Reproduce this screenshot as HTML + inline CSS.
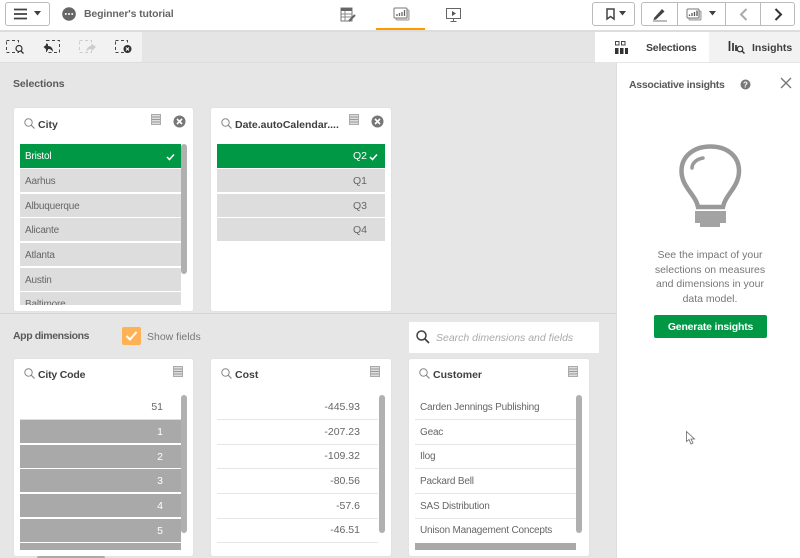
<!DOCTYPE html>
<html><head><meta charset="utf-8"><style>
html,body{margin:0;padding:0}
body{width:800px;height:558px;position:relative;overflow:hidden;background:#e6e6e6;font-family:"Liberation Sans",sans-serif;color:#595959}
.a{position:absolute}
.t{position:absolute;white-space:nowrap;font-size:10.5px;line-height:14px}
.b{font-weight:bold;color:#404040}
.card{position:absolute;background:#fff;border-radius:2px;box-shadow:0 0 1px #ccc}
.row{position:absolute;height:23px;line-height:25px;font-size:10.5px;white-space:nowrap;overflow:hidden}
.x{font-size:10px;letter-spacing:-0.2px}
.g{background:#ddd;color:#666}
.s{background:#009845;color:#fff}
.d{background:#a9a9a9;color:#fff;text-align:right}
.w{color:#666}
.sb{position:absolute;width:6px;background:#b0b0b0;border-radius:3px}
.btn{position:absolute;top:2px;height:24px;background:#fff;border:1px solid #bbb;box-sizing:border-box}
svg{position:absolute;overflow:visible}
</style></head><body>

<!-- top bar -->
<div class="a" style="left:0;top:0;width:800px;height:30px;background:#fff"></div>
<div class="a" style="left:0;top:30px;width:800px;height:2px;background:#ddd"></div>
<div class="btn" style="left:5px;width:45px;border-radius:3px"></div>
<svg style="left:14px;top:8px" width="14" height="12"><path d="M0 1.5H13M0 6H13M0 10.500H13" stroke="#404040" stroke-width="1.800" fill="none"/></svg>
<svg style="left:34px;top:11px" width="8" height="6"><path d="M0 0H7L3.500 4.500Z" fill="#404040"/></svg>
<svg style="left:62px;top:7px" width="14" height="14"><circle cx="7" cy="7" r="6.800" fill="#666"/><circle cx="3.800" cy="7" r="1" fill="#fff"/><circle cx="7" cy="7" r="1" fill="#fff"/><circle cx="10.200" cy="7" r="1" fill="#fff"/></svg>
<div class="t" style="left:84px;top:7px;font-weight:bold;color:#666;letter-spacing:-0.15px;">Beginner's tutorial</div>

<!-- center tabs -->
<svg style="left:340px;top:7px" width="18" height="16"><rect x="1" y="1" width="11" height="13" fill="#fff" stroke="#777"/><path d="M1 2.500H12" stroke="#666" stroke-width="3"/><path d="M1 7H12M1 10H12M5 4V14" stroke="#888"/><path d="M9 14L15 8" stroke="#666" stroke-width="2"/></svg>
<svg style="left:393px;top:7px" width="17" height="14"><rect x="3" y="3" width="13" height="10" rx="1" fill="#ddd" stroke="#999"/><rect x="1" y="1" width="13" height="10" rx="1" fill="#fff" stroke="#777"/><path d="M4 9V7M6.500 9V6M9 9V5M11.500 9V3" stroke="#666" stroke-width="1.300"/></svg>
<div class="a" style="left:376px;top:28px;width:49px;height:2px;background:#f90"></div>
<svg style="left:446px;top:8px" width="15" height="14"><rect x="0.500" y="0.500" width="14" height="10" fill="#fff" stroke="#666"/><path d="M6 3L10 5.500L6 8Z" fill="#555"/><path d="M7.500 11V13M4.500 13.500H10.500" stroke="#666"/></svg>

<!-- right buttons -->
<div class="btn" style="left:592px;width:43px;border-radius:3px"></div>
<svg style="left:606px;top:8px" width="9" height="12"><path d="M1 1H8V11L4.500 8.500L1 11Z" fill="none" stroke="#444" stroke-width="1.500"/></svg>
<svg style="left:619px;top:11px" width="8" height="6"><path d="M0 0H7L3.500 4.500Z" fill="#404040"/></svg>
<div class="btn" style="left:641px;width:37px;border-radius:3px 0 0 3px"></div>
<svg style="left:652px;top:7px" width="16" height="15"><path d="M2 11L10 2L12.500 4.500L4 12.500L1.500 13Z" fill="#444"/><path d="M1 14H15" stroke="#777"/></svg>
<div class="btn" style="left:677px;width:49px"></div>
<svg style="left:686px;top:8px" width="16" height="13"><rect x="3" y="3" width="12" height="9" rx="1" fill="#ddd" stroke="#999"/><rect x="1" y="1" width="12" height="9" rx="1" fill="#fff" stroke="#777"/><path d="M3.500 8V6.500M6 8V5M8.500 8V4M11 8V2.500" stroke="#555" stroke-width="1.300"/></svg>
<svg style="left:709px;top:11px" width="8" height="6"><path d="M0 0H7L3.500 4.500Z" fill="#404040"/></svg>
<div class="btn" style="left:725px;width:36px"></div>
<svg style="left:739px;top:8px" width="9" height="13"><path d="M7.500 1L2 6.500L7.500 12" fill="none" stroke="#aaa" stroke-width="2"/></svg>
<div class="btn" style="left:760px;width:35px;border-radius:0 3px 3px 0"></div>
<svg style="left:774px;top:8px" width="9" height="13"><path d="M1.500 1L7 6.500L1.500 12" fill="none" stroke="#333" stroke-width="2"/></svg>

<!-- toolbar row -->
<div class="a" style="left:0;top:32px;width:142px;height:30px;background:#f2f2f2"></div>
<div class="a" style="left:142px;top:32px;width:453px;height:30px;background:#e5e5e5"></div>
<div class="a" style="left:0;top:62px;width:595px;height:1px;background:#ddd"></div>
<svg style="left:6px;top:40px" width="18" height="14"><rect x="0.500" y="0.500" width="12" height="12" fill="none" stroke="#444" stroke-dasharray="3 2.500"/><circle cx="13" cy="8.500" r="3" fill="#f2f2f2" stroke="#333" stroke-width="1.200"/><path d="M15 11L17.500 13.500" stroke="#333" stroke-width="1.300"/></svg>
<svg style="left:43px;top:40px" width="18" height="14"><rect x="3.500" y="0.500" width="13" height="12" fill="none" stroke="#444" stroke-dasharray="3 2.500"/><path d="M0.500 7L5 3.500V6C8 6 10 8 10 12C8.500 9.500 7 9 5 9V11Z" fill="#333"/></svg>
<svg style="left:79px;top:40px" width="18" height="14"><rect x="0.500" y="0.500" width="12" height="12" fill="none" stroke="#ccc" stroke-dasharray="3 2.500"/><path d="M17 7L12.500 3.500V6C9.500 6 7.500 8 7.500 12C9 9.500 10.500 9 12.500 9V11Z" fill="#ccc"/></svg>
<svg style="left:115px;top:40px" width="18" height="14"><rect x="0.500" y="0.500" width="12" height="12" fill="none" stroke="#444" stroke-dasharray="3 2.500"/><circle cx="12.500" cy="9" r="4" fill="#333"/><path d="M11 7.500L14 10.500M14 7.500L11 10.500" stroke="#fff"/></svg>

<!-- tabs -->
<div class="a" style="left:595px;top:32px;width:114px;height:30px;background:#fff"></div>
<div class="a" style="left:709px;top:32px;width:91px;height:30px;background:#f2f2f2"></div>
<svg style="left:614px;top:41px" width="14" height="13"><rect x="1.500" y="0.500" width="3.500" height="3.500" fill="none" stroke="#444"/><rect x="7.500" y="0.500" width="3.500" height="3.500" fill="none" stroke="#444"/><rect x="1" y="7" width="3.500" height="6" fill="#333"/><rect x="6" y="7" width="3.500" height="6" fill="#333"/><rect x="11" y="7" width="3" height="6" fill="#333"/></svg>
<div class="t b" style="left:646px;top:41px;letter-spacing:-0.2px;">Selections</div>
<svg style="left:728px;top:41px" width="18" height="13"><path d="M1.500 0V10M5 2V10M8 4V10" stroke="#333" stroke-width="1.700"/><circle cx="12" cy="8" r="2.800" fill="none" stroke="#333" stroke-width="1.200"/><path d="M14 10L16.500 12.500" stroke="#333" stroke-width="1.300"/></svg>
<div class="t b" style="left:752px;top:41px;">Insights</div>

<!-- right panel -->
<div class="a" style="left:616px;top:63px;width:184px;height:495px;background:#fff;border-left:1px solid #ddd;box-sizing:border-box"></div>
<div class="t" style="left:629px;top:78px;font-weight:bold;color:#595959;letter-spacing:-0.3px;">Associative insights</div>
<svg style="left:740px;top:79px" width="11" height="11"><circle cx="5.500" cy="5.500" r="5" fill="#777"/><text x="5.500" y="8.500" font-size="8" font-weight="bold" fill="#fff" text-anchor="middle" font-family="Liberation Sans">?</text></svg>
<svg style="left:780px;top:77px" width="12" height="12"><path d="M1 1L11 11M11 1L1 11" stroke="#777" stroke-width="1.400"/></svg>
<svg style="left:678px;top:143px" width="64" height="86"><path d="M20 64C18 52 3.500 44 3.500 28C3.500 13 16 3.500 32.500 3.500C49 3.500 61 13 61 28C61 44 47 52 45 64Z" fill="none" stroke="#999" stroke-width="4.500"/><path d="M14 25C14 20 19 16 25 15" fill="none" stroke="#999" stroke-width="3.500" stroke-linecap="round"/><path d="M17 68H48V80H42V84H22V80H17Z" fill="#a3a3a3"/></svg>
<div class="t" style="left:617px;top:248px;width:186px;text-align:center;color:#777;line-height:14.500px;white-space:normal;">See the impact of your<br>selections on measures<br>and dimensions in your<br>data model.</div>
<div class="a" style="left:654px;top:315px;width:113px;height:23px;background:#009845;border-radius:2px;color:#fff;font-weight:bold;font-size:10.5px;letter-spacing:-0.2px;line-height:25px;text-align:center;">Generate insights</div>
<svg style="left:686px;top:431px" width="10" height="14"><path d="M0.500 0.500V10.500L3 8.500L5 13L7 12L5 8H8.500Z" fill="#fff" stroke="#666" stroke-width="0.800"/></svg>

<!-- selections -->
<div class="t b" style="left:13px;top:77px;color:#595959;letter-spacing:-0.1px;">Selections</div>
<div class="a" style="left:0;top:313px;width:616px;height:1px;background:#d4d4d4"></div>

<!-- City card -->
<div class="card" style="left:14px;top:108px;width:179px;height:203px"></div>
<svg style="left:24px;top:118px" width="11" height="11"><circle cx="4.500" cy="4.500" r="3.700" fill="none" stroke="#888"/><path d="M7 7L10.500 10.500" stroke="#888" stroke-width="1.200"/></svg>
<div class="t b" style="left:38px;top:118px;">City</div>
<svg style="left:151px;top:114px" width="10" height="12"><rect x="0.500" y="0.500" width="9" height="10" fill="#ddd" stroke="#aaa"/><path d="M1 3H9M1 5.500H9M1 8H9" stroke="#999"/></svg>
<svg style="left:173px;top:115px" width="13" height="13"><circle cx="6.500" cy="6.500" r="6" fill="#777"/><path d="M4 4L9 9M9 4L4 9" stroke="#fff" stroke-width="1.600"/></svg>
<div class="row s x" style="left:20px;top:144px;width:156px;padding-left:5px;height:24px;line-height:25px;">Bristol</div>
<svg style="left:166px;top:153px" width="9" height="8"><path d="M1 4L3.500 6.500L8 1.500" fill="none" stroke="#fff" stroke-width="1.500"/></svg>
<div class="row g x" style="left:20px;top:169px;width:156px;padding-left:5px;">Aarhus</div>
<div class="row g x" style="left:20px;top:193.500px;width:156px;padding-left:5px;">Albuquerque</div>
<div class="row g x" style="left:20px;top:218px;width:156px;padding-left:5px;">Alicante</div>
<div class="row g x" style="left:20px;top:243px;width:156px;padding-left:5px;">Atlanta</div>
<div class="row g x" style="left:20px;top:267.500px;width:156px;padding-left:5px;">Austin</div>
<div class="row g x" style="left:20px;top:292px;width:156px;padding-left:5px;height:13px;">Baltimore</div>
<div class="sb" style="left:181px;top:144px;height:130px"></div>

<!-- Date card -->
<div class="card" style="left:211px;top:108px;width:180px;height:203px"></div>
<svg style="left:221px;top:118px" width="11" height="11"><circle cx="4.500" cy="4.500" r="3.700" fill="none" stroke="#888"/><path d="M7 7L10.500 10.500" stroke="#888" stroke-width="1.200"/></svg>
<div class="t b" style="left:235px;top:118px;">Date.autoCalendar....</div>
<svg style="left:349px;top:114px" width="10" height="12"><rect x="0.500" y="0.500" width="9" height="10" fill="#ddd" stroke="#aaa"/><path d="M1 3H9M1 5.500H9M1 8H9" stroke="#999"/></svg>
<svg style="left:371px;top:115px" width="13" height="13"><circle cx="6.500" cy="6.500" r="6" fill="#777"/><path d="M4 4L9 9M9 4L4 9" stroke="#fff" stroke-width="1.600"/></svg>
<div class="row s" style="left:217px;top:144px;width:168px;height:24px;line-height:25px;text-align:right;"><span style="margin-right:18px">Q2</span></div>
<svg style="left:369px;top:153px" width="9" height="8"><path d="M1 4L3.500 6.500L8 1.500" fill="none" stroke="#fff" stroke-width="1.500"/></svg>
<div class="row g" style="left:217px;top:169px;width:168px;text-align:right"><span style="margin-right:18px">Q1</span></div>
<div class="row g" style="left:217px;top:193.500px;width:168px;text-align:right"><span style="margin-right:18px">Q3</span></div>
<div class="row g" style="left:217px;top:218px;width:168px;text-align:right"><span style="margin-right:18px">Q4</span></div>

<!-- App dimensions -->
<div class="t b" style="left:13px;top:329px;color:#595959;letter-spacing:-0.4px;">App dimensions</div>
<div class="a" style="left:122px;top:327px;width:19px;height:18px;background:#ffb255;border-radius:2px"></div>
<svg style="left:125px;top:330px" width="13" height="12"><path d="M1.500 6L5 9.500L11.500 2" fill="none" stroke="#fff" stroke-width="2"/></svg>
<div class="t" style="left:147px;top:330px;color:#777;">Show fields</div>
<div class="a" style="left:409px;top:322px;width:190px;height:31px;background:#fff"></div>
<svg style="left:416px;top:330px" width="14" height="14"><circle cx="5.500" cy="5.500" r="4.500" fill="none" stroke="#404040" stroke-width="1.500"/><path d="M9 9L13 13" stroke="#404040" stroke-width="1.700"/></svg>
<div class="t" style="left:436px;top:331px;font-style:italic;color:#aaa;">Search dimensions and fields</div>

<!-- City Code -->
<div class="card" style="left:14px;top:359px;width:179px;height:197px"></div>
<svg style="left:24px;top:368px" width="11" height="11"><circle cx="4.500" cy="4.500" r="3.700" fill="none" stroke="#888"/><path d="M7 7L10.500 10.500" stroke="#888" stroke-width="1.200"/></svg>
<div class="t b" style="left:38px;top:368px;letter-spacing:-0.2px;">City Code</div>
<svg style="left:173px;top:366px" width="10" height="12"><rect x="0.500" y="0.500" width="9" height="10" fill="#ddd" stroke="#aaa"/><path d="M1 3H9M1 5.500H9M1 8H9" stroke="#999"/></svg>
<div class="row" style="left:20px;top:395px;width:143px;text-align:right;color:#666;">51</div>
<div class="a" style="left:20px;top:419px;width:161px;height:1px;background:#ddd"></div>
<div class="row d" style="left:20px;top:420px;width:143px;padding-right:18px;">1</div>
<div class="row d" style="left:20px;top:444.500px;width:143px;padding-right:18px;">2</div>
<div class="row d" style="left:20px;top:469px;width:143px;padding-right:18px;">3</div>
<div class="row d" style="left:20px;top:494px;width:143px;padding-right:18px;">4</div>
<div class="row d" style="left:20px;top:518.500px;width:143px;padding-right:18px;">5</div>
<div class="a" style="left:20px;top:543px;width:161px;height:7px;background:#a9a9a9"></div>
<div class="sb" style="left:181px;top:395px;height:138px"></div>

<!-- Cost -->
<div class="card" style="left:211px;top:359px;width:180px;height:197px"></div>
<svg style="left:221px;top:368px" width="11" height="11"><circle cx="4.500" cy="4.500" r="3.700" fill="none" stroke="#888"/><path d="M7 7L10.500 10.500" stroke="#888" stroke-width="1.200"/></svg>
<div class="t b" style="left:235px;top:368px;">Cost</div>
<svg style="left:370px;top:366px" width="10" height="12"><rect x="0.500" y="0.500" width="9" height="10" fill="#ddd" stroke="#aaa"/><path d="M1 3H9M1 5.500H9M1 8H9" stroke="#999"/></svg>
<div class="row w" style="left:217px;top:395px;width:143px;text-align:right;">-445.93</div>
<div class="row w" style="left:217px;top:419.500px;width:143px;text-align:right;">-207.23</div>
<div class="row w" style="left:217px;top:444px;width:143px;text-align:right;">-109.32</div>
<div class="row w" style="left:217px;top:469px;width:143px;text-align:right;">-80.56</div>
<div class="row w" style="left:217px;top:493.500px;width:143px;text-align:right;">-57.6</div>
<div class="row w" style="left:217px;top:518px;width:143px;text-align:right;">-46.51</div>
<div class="a" style="left:217px;top:419px;width:161px;height:1px;background:#e6e6e6"></div>
<div class="a" style="left:217px;top:444px;width:161px;height:1px;background:#e6e6e6"></div>
<div class="a" style="left:217px;top:468px;width:161px;height:1px;background:#e6e6e6"></div>
<div class="a" style="left:217px;top:493px;width:161px;height:1px;background:#e6e6e6"></div>
<div class="a" style="left:217px;top:518px;width:161px;height:1px;background:#e6e6e6"></div>
<div class="a" style="left:217px;top:542px;width:161px;height:1px;background:#e6e6e6"></div>
<div class="sb" style="left:379px;top:395px;height:138px"></div>

<!-- Customer -->
<div class="card" style="left:409px;top:359px;width:180px;height:197px"></div>
<svg style="left:419px;top:368px" width="11" height="11"><circle cx="4.500" cy="4.500" r="3.700" fill="none" stroke="#888"/><path d="M7 7L10.500 10.500" stroke="#888" stroke-width="1.200"/></svg>
<div class="t b" style="left:433px;top:368px;">Customer</div>
<svg style="left:568px;top:366px" width="10" height="12"><rect x="0.500" y="0.500" width="9" height="10" fill="#ddd" stroke="#aaa"/><path d="M1 3H9M1 5.500H9M1 8H9" stroke="#999"/></svg>
<div class="row x" style="left:420px;top:395px;color:#666;">Carden Jennings Publishing</div>
<div class="row x" style="left:420px;top:420px;color:#666;">Geac</div>
<div class="row x" style="left:420px;top:444px;color:#666;">Ilog</div>
<div class="row x" style="left:420px;top:469px;color:#666;">Packard Bell</div>
<div class="row x" style="left:420px;top:494px;color:#666;">SAS Distribution</div>
<div class="row x" style="left:420px;top:518px;color:#666;">Unison Management Concepts</div>
<div class="a" style="left:415px;top:419px;width:161px;height:1px;background:#e6e6e6"></div>
<div class="a" style="left:415px;top:444px;width:161px;height:1px;background:#e6e6e6"></div>
<div class="a" style="left:415px;top:468px;width:161px;height:1px;background:#e6e6e6"></div>
<div class="a" style="left:415px;top:493px;width:161px;height:1px;background:#e6e6e6"></div>
<div class="a" style="left:415px;top:518px;width:161px;height:1px;background:#e6e6e6"></div>
<div class="a" style="left:415px;top:543px;width:161px;height:7px;background:#a9a9a9"></div>
<div class="sb" style="left:576px;top:395px;height:138px"></div>

<!-- page scrollbar -->
<div class="a" style="left:37px;top:556px;width:68px;height:2px;background:#aaa;border-radius:2px 2px 0 0"></div>
</body></html>
